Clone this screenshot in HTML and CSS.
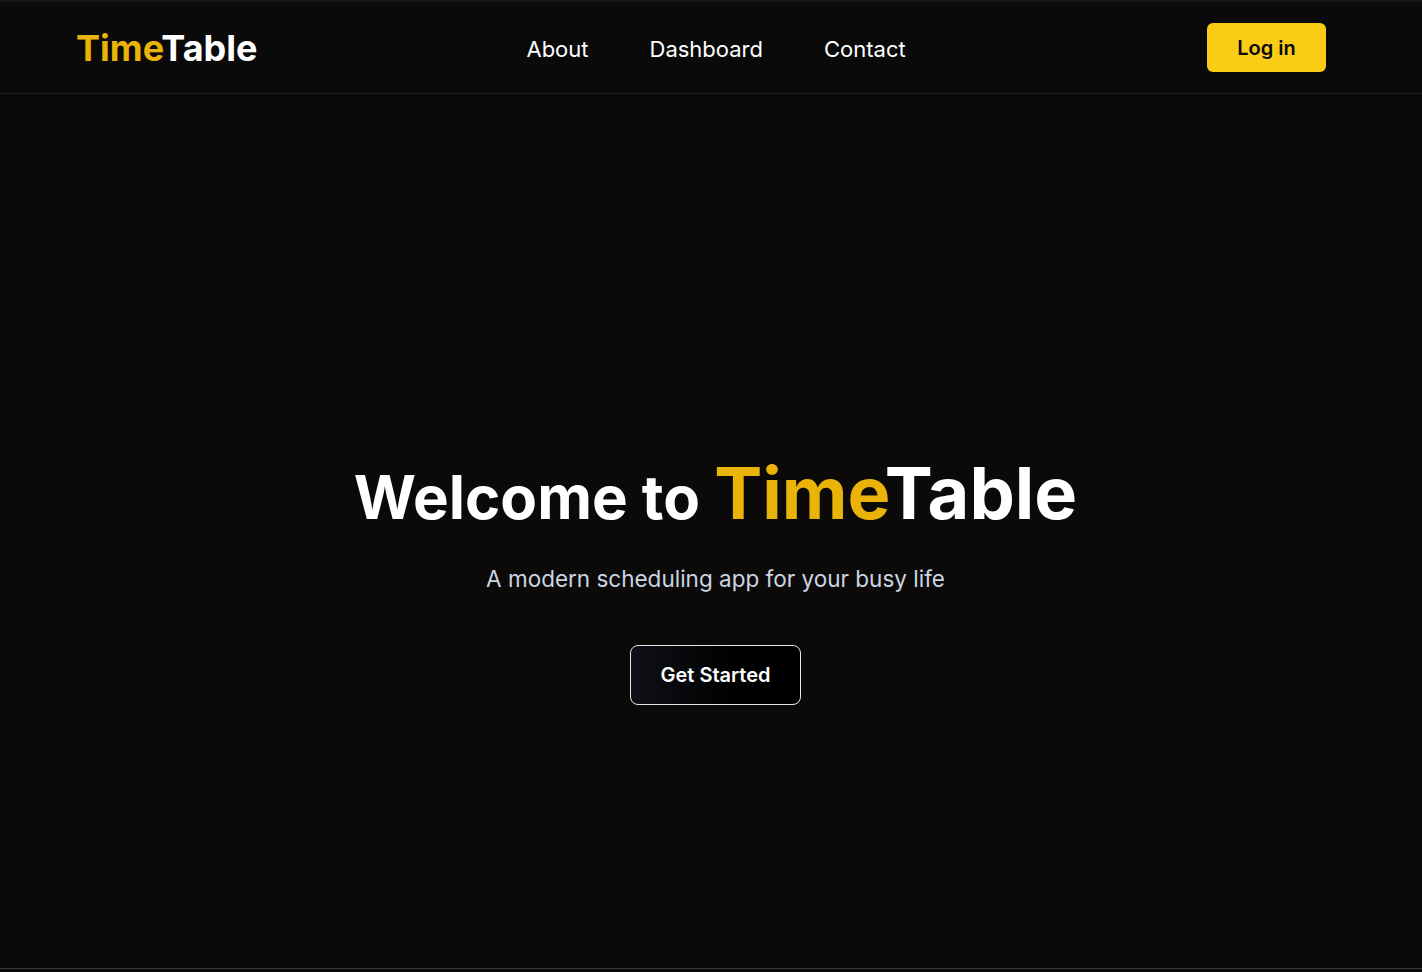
FILE: index.html
```html
<!DOCTYPE html>
<html lang="en">
<head>
<meta charset="utf-8">
<title>TimeTable</title>
<link rel="stylesheet" href="styles.css">
</head>
<body>
<div class="app">
  <header class="header">
    <a class="logo" href="#"><span class="accent">Time</span>Table</a>
    <nav class="nav">
      <a href="#">About</a>
      <a href="#">Dashboard</a>
      <a href="#">Contact</a>
    </nav>
    <a class="login" href="#">Log in</a>
  </header>
  <main class="hero">
    <h1 class="title">Welcome to <span class="brand"><span class="accent">Time</span>Table</span></h1>
    <p class="subtitle">A modern scheduling app for your busy life</p>
    <a class="cta" href="#">Get Started</a>
  </main>
</div>
<div class="frame-bottom"></div>
</body>
</html>
```
FILE: styles.css
```css
* { box-sizing: border-box; }
html, body { margin: 0; padding: 0; }
body {
  background: #0c0a09;
  font-family: "Inter", "Noto Sans", sans-serif;
  color: #ffffff;
  overflow: hidden;
}
a { text-decoration: none; color: inherit; }
.app { border-top: 2px solid #171717; }
.header {
  height: 92px;
  display: flex;
  align-items: center;
  padding: 0 96px 0 76px;
  background: #0a0a0a;
  border-bottom: 1px solid #1b1e2a;
}
.logo {
  font-size: 36px;
  font-weight: 700;
  color: #ffffff;
}
.accent { color: #eab308; }
.nav {
  display: flex;
  gap: 61px;
  margin-left: 269px;
  padding-top: 2px;
}
.nav a {
  font-size: 22px;
  font-weight: 400;
  color: #ffffff;
}
.login {
  margin-left: auto;
  width: 119px;
  height: 49px;
  display: flex;
  align-items: center;
  justify-content: center;
  background: #facc15;
  color: #0a0a0a;
  border-radius: 6px;
  font-size: 20px;
  font-weight: 600;
}
.hero {
  min-height: 100vh;
  display: flex;
  flex-direction: column;
  align-items: center;
  justify-content: center;
  text-align: center;
  padding-left: 9px;
}
.title {
  margin: 0;
  font-size: 60px;
  line-height: 73px;
  font-weight: 700;
  letter-spacing: 0;
}
.brand { font-size: 72px; }
.subtitle {
  margin: 28px 0 0;
  font-size: 22.5px;
  line-height: 33px;
  color: #cbd5e1;
}
.cta {
  margin-top: 50px;
  width: 171px;
  height: 60px;
  display: flex;
  align-items: center;
  justify-content: center;
  border: 1px solid #e5e7eb;
  border-radius: 8px;
  background: linear-gradient(90deg, #0f1117 0%, #000000 60%);
  font-size: 20px;
  font-weight: 600;
  color: #ffffff;
}
.frame-bottom {
  position: fixed;
  left: 0;
  right: 0;
  bottom: 0;
  height: 4px;
  border-top: 1px solid #3a3a3a;
  background: #0c0a09;
}
```
